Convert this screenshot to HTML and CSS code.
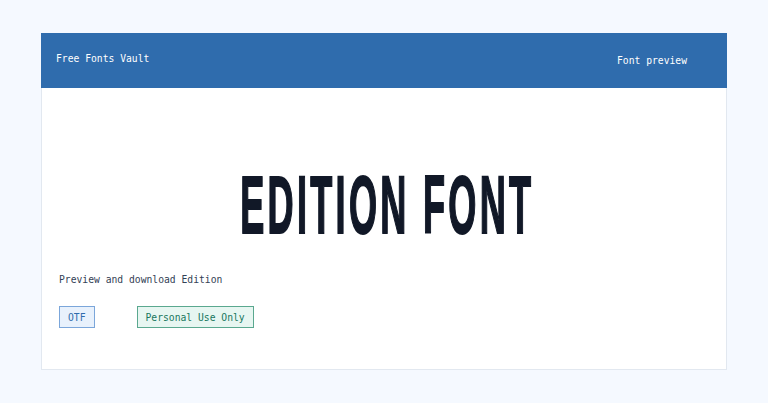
FILE: index.html
```html
<!DOCTYPE html>
<html lang="en">
<head>
    <meta charset="UTF-8">
    <meta name="viewport" content="width=device-width, initial-scale=1.0">
    <title>Edition Font - Free Fonts Vault</title>
    <link rel="stylesheet" href="styles.css">
</head>
<body>
    <div class="card">
        <header class="topbar">
            <span class="brand">Free Fonts Vault</span>
            <span class="nav">Font preview</span>
        </header>

        <div class="preview">
            <h1 class="sample"><span>EDITION FONT</span></h1>
        </div>

        <div class="meta">
            <p class="lead">Preview and download Edition</p>
            <div class="badges">
                <span class="badge format">OTF</span>
                <span class="badge license">Personal Use Only</span>
            </div>
        </div>
    </div>
</body>
</html>
```

FILE: styles.css
```css
body {
    font-family: "DejaVu Sans Mono", "Liberation Mono", monospace;
    font-size: 9.7px;
    background-color: #f5f9ff;
    color: #1f2937;
    margin: 0;
    padding: 33px 41px;
}
.card {
    height: 337px;
    box-sizing: border-box;
    background: white;
    border: 1px solid #e2e8f0;
    border-top: none;
}
.topbar {
    height: 55px;
    margin: 0 -1px;
    background: #2f6cad;
    color: white;
    display: flex;
    justify-content: space-between;
    align-items: center;
    padding: 0 40px 0 15px;
}
.brand {
    margin-bottom: 5px;
}
.preview {
    padding-top: 76px;
    text-align: center;
}
.sample {
    margin: 0;
    height: 84px;
    font-family: "Liberation Sans", Arial, sans-serif;
    font-size: 82px;
    font-weight: bold;
    line-height: 82px;
    color: #111827;
}
.sample span {
    display: inline-block;
    letter-spacing: 7.5px;
    margin-right: -7.5px;
    transform: scaleX(0.44);
    -webkit-text-stroke: 2px #111827;
}
.meta {
    padding: 25px 17px 0;
}
.lead {
    margin: 0;
    line-height: 14px;
    color: #334155;
}
.badges {
    display: flex;
    gap: 42px;
    margin-top: 19px;
}
.badge {
    height: 22px;
    box-sizing: border-box;
    display: flex;
    align-items: center;
    padding: 0 8px;
    border: 1px solid;
}
.format {
    background: #e8f1fc;
    border-color: #7ba6da;
    color: #2f6cad;
}
.license {
    background: #e7f6f1;
    border-color: #5aa88f;
    color: #17775d;
}
```
